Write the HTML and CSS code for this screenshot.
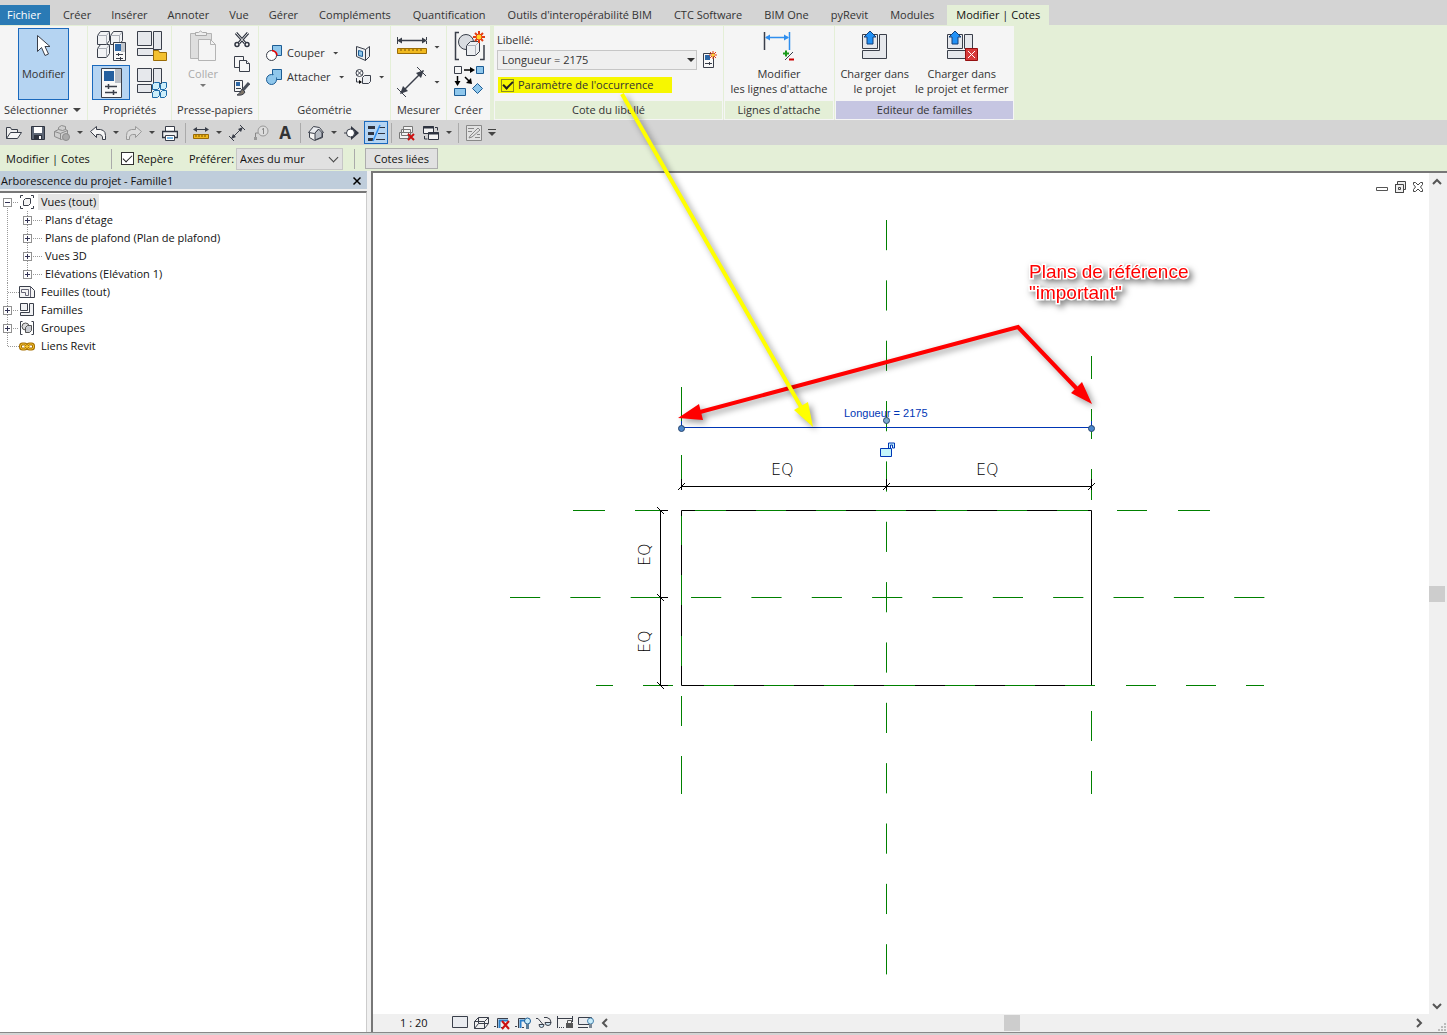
FILE: index.html
```html
<!DOCTYPE html>
<html lang="fr">
<head>
    <meta charset="UTF-8">
    <meta name="viewport" content="width=device-width, initial-scale=1.0">
    <title>Famille1</title>
    <link rel="stylesheet" href="styles.css">
</head>
<body>
    <div class="app">
        <nav class="tabs">
            <button class="tab file">Fichier</button>
            <button class="tab">Créer</button>
            <button class="tab">Insérer</button>
            <button class="tab">Annoter</button>
            <button class="tab">Vue</button>
            <button class="tab">Gérer</button>
            <button class="tab">Compléments</button>
            <button class="tab">Quantification</button>
            <button class="tab">Outils d'interopérabilité BIM</button>
            <button class="tab">CTC Software</button>
            <button class="tab">BIM One</button>
            <button class="tab">pyRevit</button>
            <button class="tab">Modules</button>
            <button class="tab active">Modifier | Cotes</button>
        </nav>

        <div class="ribbon">
            <section class="panel">
                <div class="panel-body">
                    <button class="big selected">
                        <svg width="32" height="32" viewBox="0 0 32 32"><path d="M9.500 5.500v16l4-4 3.500 8 3.500-1.500-3.500-7.500h5z" fill="#fff" stroke="#3a3f4a"/></svg>
                        <span>Modifier</span>
                    </button>
                </div>
                <div class="panel-title">Sélectionner <i class="caret wide"></i></div>
            </section>

            <section class="panel">
                <div class="panel-body props">
                    <button class="tool" aria-label="Propriétés du type">
                        <svg width="32" height="32" viewBox="0 0 32 32">
                            <g fill="#f2f3f5" stroke="#3a3f4a"><path d="M2.500 5.500l3-4h9v9l-3 4h-9zM15.500 5.500l3-4h9v9l-3 4h-9zM2.500 18.500l3-4h9v9l-3 4h-9z"/><path d="M2.500 5.500h9v9M11.500 5.500l3-4M15.500 5.500h9v8M24.500 5.500l3-4M2.500 18.500h9v9M11.500 18.500l3-4" fill="none" stroke="#a9adb5"/><path d="M18.500 12.500h12v18h-12z" fill="#f8f8f8"/></g>
                            <path d="M20 14h6v7h-6z" fill="#2d67a6"/><path d="M26 13h4v9h-4z" fill="#c4c8ce"/><path d="M21 24.500h7M21 28.500h7M23.500 23v3M25.500 27v3" stroke="#3a3f4a"/>
                        </svg>
                    </button>
                    <button class="tool" aria-label="Catégorie et paramètres">
                        <svg width="32" height="32" viewBox="0 0 32 32">
                            <g fill="#e6e8ec" stroke="#3a3f4a"><path d="M2.500 1.500h14v14h-14z"/><path d="M18.500 1.500h8v18h-8z"/><path d="M2.500 18.500h16v7h-16z"/></g>
                            <path d="M18.500 20.500h5l1 2h7v8h-13z" fill="#f3c02f" stroke="#9a6b05"/>
                        </svg>
                    </button>
                    <button class="tool selected" aria-label="Propriétés">
                        <svg width="32" height="32" viewBox="0 0 32 32">
                            <path d="M6.500 1.500h20v29h-20z" fill="#f8f8f8" stroke="#3a3f4a"/><path d="M20 2h6v14h-6z" fill="#b9bec6"/><path d="M9 4h10v10H9z" fill="#245f9f"/>
                            <path d="M10 19.500h12M10 25.500h12M13.500 17v5M18.500 23v5" stroke="#3a3f4a" stroke-width="1.500"/>
                        </svg>
                    </button>
                    <button class="tool" aria-label="Types de familles">
                        <svg width="32" height="32" viewBox="0 0 32 32">
                            <g fill="#e6e8ec" stroke="#3a3f4a"><path d="M2.500 1.500h14v13h-14z"/><path d="M18.500 1.500h8v15h-8z"/><path d="M2.500 17.500h14v8h-14z"/></g>
                            <g fill="#cdeefa" stroke="#1c6aa8"><path d="M17.500 17.500l2-2h5v5l-2 2h-5zM25.500 17.500l2-2h4v5l-2 2h-4zM17.500 25.500l2-2h5v5l-2 2h-5zM25.500 25.500l2-2h4v5l-2 2h-4z"/></g>
                        </svg>
                    </button>
                </div>
                <div class="panel-title">Propriétés</div>
            </section>

            <section class="panel">
                <div class="panel-body clip">
                    <button class="big" disabled>
                        <svg width="32" height="32" viewBox="0 0 32 32"><path d="M3.500 3.500h21v25h-21z" fill="#dedede" stroke="#b4b4b4"/><path d="M8.500 5.500v-3h3q2-3 4 0h4v3z" fill="#eee" stroke="#aaa"/><path d="M11.500 9.500h12l5 5v16h-17z" fill="#f4f4f4" stroke="#b4b4b4"/><path d="M23.500 9.500v5h5" fill="none" stroke="#b4b4b4"/></svg>
                        <span>Coller</span>
                        <i class="caret"></i>
                    </button>
                    <div class="stack">
                        <button class="small" aria-label="Couper"><svg width="16" height="16" viewBox="0 0 16 16"><path d="M2 1l9 10M14 1L5 11" stroke="#2f3440" stroke-width="3"/><path d="M2 1l9 10M14 1L5 11" stroke="#eee"/><g fill="none" stroke="#2f3440" stroke-width="1.500"><circle cx="3" cy="12.500" r="2"/><circle cx="13" cy="12.500" r="2"/></g></svg></button>
                        <button class="small" aria-label="Copier"><svg width="16" height="16" viewBox="0 0 16 16"><g fill="#f6f6f6" stroke="#3a3f4a"><path d="M.5.5h9v11h-9z"/><path d="M5.500 4.500h7l3 3v8h-10z"/><path d="M12.500 4.500v3h3"/></g></svg></button>
                        <button class="small" aria-label="Copier le type"><svg width="16" height="16" viewBox="0 0 16 16"><path d="M.5.500h8v11h-8z" fill="#f6f6f6" stroke="#3a3f4a"/><path d="M2 2h4v4H2z" fill="#2d67a6"/><path d="M2 8.500h5" stroke="#3a3f4a"/><path d="M15 3l-6 7" stroke="#4a4f5a" stroke-width="3"/><path d="M8 9l3 3q-2 4-8 3 3-1 5-6z" fill="#7c7368" stroke="#3a3f4a"/></svg></button>
                    </div>
                </div>
                <div class="panel-title">Presse-papiers</div>
            </section>

            <section class="panel">
                <div class="panel-body geo">
                    <div class="stack">
                        <button class="row"><svg width="16" height="16" viewBox="0 0 16 16"><path d="M6.500.5h9v10h-9z" fill="#8fc7ec" stroke="#1c5c94"/><circle cx="5.500" cy="10.500" r="5" fill="#fff" stroke="#3a3f4a"/><path d="M6 5.500q5 1 5 5" fill="none" stroke="#e00" stroke-width="1.500"/></svg>Couper<i class="caret"></i></button>
                        <button class="row"><svg width="16" height="16" viewBox="0 0 16 16"><g fill="#8fc7ec" stroke="#1c5c94"><path d="M6.500.5h9v10h-9z"/><circle cx="5.500" cy="10.500" r="5"/></g><path d="M7 6h3v4H7z" fill="#8fc7ec"/></svg>Attacher<i class="caret"></i></button>
                    </div>
                    <div class="stack">
                        <button class="row" aria-label="Scinder"><svg width="16" height="16" viewBox="0 0 16 16"><path d="M1.500 1.500l9 3 4-3v10l-4 4-9-4z" fill="#eceef1" stroke="#3a3f4a"/><path d="M10.500 4.500v11" stroke="#3a3f4a"/><path d="M3.500 5.500l4 1v5l-4-1z" fill="#8fc7ec" stroke="#1c5c94"/></svg></button>
                        <button class="row" aria-label="Démolir"><svg width="16" height="16" viewBox="0 0 16 16"><circle cx="4.500" cy="4" r="3.500" fill="#fff" stroke="#3a3f4a"/><path d="M2 1.500l5 5M7 1.500l-5 5M1.500 9v4h3" fill="none" stroke="#3a3f4a"/><path d="M4 11l3 2-3 2z"/><path d="M7.500 8.500l2-2h6v6l-2 2h-6z" fill="#eceef1" stroke="#3a3f4a"/></svg><i class="caret"></i></button>
                    </div>
                </div>
                <div class="panel-title">Géométrie</div>
            </section>

            <section class="panel">
                <div class="panel-body measure">
                    <button class="row"><svg width="32" height="32" viewBox="0 0 32 32"><path d="M3 9.500h26" stroke="#3a3f4a" stroke-width="1.500"/><path d="M1 9.500l5-3v6zM31 9.500l-5-3v6zM1 6h1v7H1zM30 6h1v7h-1z" fill="#3a3f4a"/><path d="M1.500 17.500h29v5h-29z" fill="#f0b91f" stroke="#9a6b05"/><path d="M5 18v2M9 18v2M13 18v2M17 18v2M21 18v2M25 18v2" stroke="#7b5300"/></svg><i class="caret"></i></button>
                    <button class="row"><svg width="32" height="32" viewBox="0 0 32 32"><path d="M5 27L27 5" stroke="#3a3f4a" stroke-width="1.500"/><path d="M1 22l9 9M21 1l9 9" stroke="#3a3f4a"/><path d="M4 28l3-8 5 5zM28 4l-8 3 5 5z" fill="#3a3f4a"/></svg><i class="caret"></i></button>
                </div>
                <div class="panel-title">Mesurer</div>
            </section>

            <section class="panel">
                <div class="panel-body create">
                    <button class="tool" aria-label="Créer un groupe"><svg width="32" height="32" viewBox="0 0 32 32"><path d="M5 2.500H1.500v27H5M26 29.500h4V15" fill="none" stroke="#3a3f4a" stroke-width="1.500"/><circle cx="12" cy="12" r="7.500" fill="#d9dce1" stroke="#3a3f4a"/><path d="M12.500 15.500l4-4h9v10l-4 4h-9z" fill="#eceef1" stroke="#3a3f4a"/><path d="M12.500 15.500h9v10M21.500 15.500l4-4" fill="none" stroke="#a9adb5"/><path d="M25 1v12M19 7h12M21 3l8 8M29 3l-8 8" stroke="#e33b12" stroke-width="2"/><circle cx="25" cy="7" r="3" fill="#ffd52e" stroke="#e33b12"/></svg></button>
                    <button class="tool" aria-label="Créer un assemblage"><svg width="32" height="32" viewBox="0 0 32 32"><path d="M.5 1.500h7v7h-7z" fill="#f4f4f4" stroke="#3a3f4a"/><g fill="#8fc7ec" stroke="#1c5c94"><path d="M22.500 1.500h7v7h-7zM.5 23.500h11v7H.5zM23.500 18.500l5 5-5 5-5-5z"/></g><path d="M10 5h8M3.500 11v7M11 12l5 5" stroke="#000" stroke-width="1.500"/><path d="M21 5l-5-3v6zM3.500 21l-3-5h6zM18 19l-1-6-5 5z"/></svg></button>
                </div>
                <div class="panel-title">Créer</div>
            </section>

            <section class="panel context">
                <div class="panel-body label-body">
                    <label for="libelle">Libellé:</label>
                    <div class="label-row">
                        <div class="combo">
                            <select id="libelle"><option>Longueur = 2175</option></select>
                        </div>
                        <button class="small" aria-label="Créer un paramètre"><svg width="16" height="18" viewBox="0 0 16 18"><path d="M2.500 2.500h10v14h-10z" fill="#f8f8f8" stroke="#3a3f4a"/><path d="M4 4h5v5H4z" fill="#2d67a6"/><path d="M4 12.500h7M8.500 11v3" stroke="#3a3f4a"/><path d="M12 0v8M8 4h8M9 1l6 6M15 1L9 7" stroke="#e33b12"/><circle cx="12" cy="4" r="1.500" fill="#ffd52e"/></svg></button>
                    </div>
                    <label class="highlight"><input type="checkbox" checked>Paramètre de l'occurrence</label>
                </div>
                <div class="panel-title">Cote du libellé</div>
            </section>

            <section class="panel context">
                <div class="panel-body">
                    <button class="big">
                        <svg width="32" height="32" viewBox="0 0 32 32"><path d="M1.500 2v18" stroke="#3a3f4a" stroke-width="1.500"/><path d="M26.500 2v18M3 7.500h22" stroke="#2f8eee" stroke-width="1.500"/><path d="M2 7.500l5-3v6zM26 7.500l-5-3v6z" fill="#2f8eee"/><path d="M20 23.500h6M23 20.500v6" stroke="#1a9a1a" stroke-width="2"/><path d="M30 22l-8 8" stroke="#3a3f4a"/><path d="M26 29.500h5" stroke="#c00" stroke-width="2"/></svg>
                        <span>Modifier<br>les lignes d'attache</span>
                    </button>
                </div>
                <div class="panel-title">Lignes d'attache</div>
            </section>

            <section class="panel context family">
                <div class="panel-body pair">
                    <button class="big">
                        <svg width="32" height="32" viewBox="0 0 32 32"><g fill="#e6e8ec" stroke="#3a3f4a"><path d="M3.500 4.500h15v14h-15z"/><path d="M20.500 4.500h7v24h-24v-8h17z"/></g><path d="M11 1l6 6h-3v7H8V7H5z" fill="#2291f5" stroke="#123f78"/></svg>
                        <span>Charger dans<br>le projet</span>
                    </button>
                    <button class="big">
                        <svg width="32" height="32" viewBox="0 0 32 32"><g fill="#e6e8ec" stroke="#3a3f4a"><path d="M1.500 4.500h15v14h-15z"/><path d="M18.500 4.500h8v14h-8z"/><path d="M1.500 20.500h18v8h-18z"/></g><path d="M9 1l6 6h-3v7H6V7H3z" fill="#2291f5" stroke="#123f78"/><path d="M19.500 18.500h12v12h-12z" fill="#d83a3a" stroke="#941010"/><path d="M22 21l7 7M29 21l-7 7" stroke="#fff"/></svg>
                        <span>Charger dans<br>le projet et fermer</span>
                    </button>
                </div>
                <div class="panel-title">Editeur de familles</div>
            </section>
        </div>

        <div class="quick">
            <button aria-label="Ouvrir"><svg width="16" height="16" viewBox="0 0 16 16"><path d="M.5 13.500v-11h4l1 2h6v3" fill="#eee" stroke="#3a3f4a"/><path d="M.5 13.500l4-6h11l-4 6z" fill="#f6f6f6" stroke="#3a3f4a"/></svg></button>
            <button aria-label="Enregistrer"><svg width="16" height="16" viewBox="0 0 16 16"><path d="M1.500 1.500h13v13h-13z" fill="#5d6675" stroke="#2f3440"/><path d="M4 2h8v6H4z" fill="#fff"/><path d="M4 10h8v4H4z" fill="#2f3440"/><path d="M9 11h2v3H9z" fill="#fff"/></svg></button>
            <button aria-label="Synchroniser"><svg width="16" height="16" viewBox="0 0 16 16"><path d="M.5 6.500l4-2v-2l3-2 4 1v3l2 1v6l-6 3-7-3z" fill="#cfcfcf" stroke="#8c8c8c"/><path d="M.5 6.500l6 2v6M6.500 8.500l7-3M4.500 4.500l4 1 3-1" fill="none" stroke="#8c8c8c"/><circle cx="12" cy="12" r="3.500" fill="#aaa" stroke="#8c8c8c"/></svg></button>
            <i class="caret"></i>
            <button aria-label="Annuler"><svg width="16" height="16" viewBox="0 0 16 16"><path d="M.5 6.500l6-5v3q9-1 9 6v4h-3q1-6-6-5v3z" fill="#f6f6f6" stroke="#3a3f4a"/></svg></button>
            <i class="caret"></i>
            <button aria-label="Rétablir"><svg width="16" height="16" viewBox="0 0 16 16"><path d="M15.500 6.500l-6-5v3q-9-1-9 6v4h3q-1-6 6-5v3z" fill="#ddd" stroke="#999"/></svg></button>
            <i class="caret"></i>
            <button aria-label="Imprimer"><svg width="16" height="16" viewBox="0 0 16 16"><path d="M3.500 1.500h9v5h-9z" fill="#fff" stroke="#3a3f4a"/><path d="M.5 6.500h15v6H.5z" fill="#f0f0f0" stroke="#2f3440" stroke-width="1.500"/><path d="M3.500 10.500h9v5h-9z" fill="#fff" stroke="#3a3f4a"/><path d="M5 12h6v2H5z" fill="#79b8e6"/></svg></button>
            <i class="sep"></i>
            <button aria-label="Mesurer"><svg width="16" height="16" viewBox="0 0 16 16"><path d="M2 4.500h12" stroke="#3a3f4a"/><path d="M0 4.500l4-2.500v5zM16 4.500L12 2v5z" fill="#3a3f4a"/><path d="M.5 9.500h15v4H.5z" fill="#f0b91f" stroke="#9a6b05"/><path d="M3 10v2M6 10v2M9 10v2M12 10v2" stroke="#7b5300"/></svg></button>
            <i class="caret"></i>
            <button aria-label="Cote alignée"><svg width="16" height="16" viewBox="0 0 16 16"><path d="M3 13L13 3M0 11l5 5M11 0l5 5" stroke="#3a3f4a"/><path d="M2 14l2-5 3 3zM14 2L9 4l3 3z" fill="#3a3f4a"/></svg></button>
            <button aria-label="Étiquette"><svg width="16" height="16" viewBox="0 0 16 16"><circle cx="10" cy="6" r="5" fill="#ddd" stroke="#999"/><path d="M10.500 3v6M9 4.500l1.500-1M5 8H2.500v5" fill="none" stroke="#888"/><path d="M1 12h3v3H1z" fill="#999"/></svg></button>
            <button class="letter">A</button>
            <i class="sep"></i>
            <button aria-label="Vue 3D"><svg width="16" height="16" viewBox="0 0 16 16"><path d="M1.500 7v5.500l5 3 8-3V7z" fill="#f4f4f4" stroke="#3a3f4a"/><path d="M7 8l4-4 3 3v5l-7 3z" fill="#b9bec6" stroke="#3a3f4a"/><path d="M.5 7.500l5-6 6 1 4 5-1 .5-4-4-4 4.500z" fill="#e9ebef" stroke="#3a3f4a"/></svg></button>
            <i class="caret"></i>
            <button aria-label="Coupe"><svg width="16" height="16" viewBox="0 0 16 16"><path d="M7 1l8 7-8 7z" fill="#2f3440"/><path d="M0 8h3" stroke="#3a3f4a"/><circle cx="6.500" cy="8" r="4" fill="#fff" stroke="#3a3f4a"/></svg></button>
            <button class="selected" aria-label="Lignes fines"><svg width="18" height="18" viewBox="0 0 18 18"><path d="M1 3.500h7M1 9.500h6M1 15.500h5" stroke="#2f3440" stroke-width="3"/><path d="M12 3.500h6M11 9.500h7M9 15.500h9" stroke="#2f3440"/><path d="M13 1L6 17" stroke="#2f8eee" stroke-width="1.500"/></svg></button>
            <i class="sep"></i>
            <button aria-label="Fermer les fenêtres inactives"><svg width="16" height="16" viewBox="0 0 16 16"><g fill="#f4f4f4" stroke="#777"><path d="M4.500 1.500h9v6h-9zM2.500 4.500h9v6h-9zM.5 7.500h9v6h-9z"/></g><path d="M9 9l6 6M15 9l-6 6" stroke="#c11" stroke-width="2"/></svg></button>
            <button aria-label="Changer de fenêtre"><svg width="16" height="16" viewBox="0 0 16 16"><path d="M.5 1.500h10v7H.5zM5.500 7.500h10v7h-10z" fill="#f4f4f4" stroke="#2f3440"/><path d="M0 2.500h11M5 8.500h11" stroke="#2f3440" stroke-width="2"/><path d="M12 2.500h2.500v3M1.500 11v3h3" fill="none" stroke="#2f3440"/></svg></button>
            <i class="caret"></i>
            <i class="sep"></i>
            <button aria-label="Note"><svg width="16" height="16" viewBox="0 0 16 16"><path d="M.5.500h15v15H.5z" fill="#e2e2e2" stroke="#888"/><path d="M4 11l8-8 2 2-8 7-3 1zM2 3.500h6M2 6.500h4M9 12.500h5M11 9.500h3" fill="none" stroke="#888"/></svg></button>
            <i class="caret bar"></i>
        </div>

        <div class="options">
            <span class="mode">Modifier | Cotes</span>
            <label class="check"><input type="checkbox" checked>Repère</label>
            <label class="prefer" for="prefer">Préférer:</label>
            <div class="combo flat">
                <select id="prefer"><option>Axes du mur</option></select>
            </div>
            <i class="divider"></i>
            <button class="linked">Cotes liées</button>
        </div>

        <main class="work">
            <aside class="browser">
                <header><span>Arborescence du projet - Famille1</span><button aria-label="Fermer"><svg width="10" height="10" viewBox="0 0 10 10"><path d="M1.500 1.500l7 7M8.500 1.500l-7 7" stroke="#000" stroke-width="1.500"/></svg></button></header>
                <ul class="tree">
                    <li>
                        <div class="node"><b class="box minus"></b><svg width="16" height="16" viewBox="0 0 16 16"><path d="M4 1.500H1.500V4M12 1.500h2.500V4M1.500 12v2.500H4M14.500 12v2.500H12" fill="none" stroke="#3a3f4a"/><path d="M4.500 6.500l2-2h5v5l-2 2h-5z" fill="#f4f4f4" stroke="#3a3f4a"/></svg><span class="current">Vues (tout)</span></div>
                        <ul>
                            <li><div class="node"><b class="box"></b><span>Plans d'étage</span></div></li>
                            <li><div class="node"><b class="box"></b><span>Plans de plafond (Plan de plafond)</span></div></li>
                            <li><div class="node"><b class="box"></b><span>Vues 3D</span></div></li>
                            <li><div class="node"><b class="box"></b><span>Elévations (Elévation 1)</span></div></li>
                        </ul>
                    </li>
                    <li><div class="node"><b class="line"></b><svg width="16" height="16" viewBox="0 0 16 16"><path d="M.5 2.500h11l4 4v7H.5z" fill="#f4f4f4" stroke="#3a3f4a"/><path d="M2.500 5.500h7v6h-3v-3h-4zM11.500 3v10" fill="none" stroke="#667"/></svg><span>Feuilles (tout)</span></div></li>
                    <li><div class="node"><b class="box"></b><svg width="16" height="16" viewBox="0 0 16 16"><path d="M1.500 1.500h7v7h-7zM10.500 1.500h4v12h-13v-3h9z" fill="#f0f1f3" stroke="#3a3f4a"/></svg><span>Familles</span></div></li>
                    <li><div class="node"><b class="box"></b><svg width="16" height="16" viewBox="0 0 16 16"><path d="M3.500 1.500h-2v13h2M12.500 1.500h2v13h-2" fill="none" stroke="#3a3f4a"/><circle cx="6.500" cy="6.500" r="3.500" fill="#ddd" stroke="#555"/><path d="M6.500 7.500l2-2h4v5l-2 2h-4z" fill="#c9ccd2" stroke="#555"/></svg><span>Groupes</span></div></li>
                    <li><div class="node"><b class="line"></b><svg width="16" height="16" viewBox="0 0 16 16"><g fill="none" stroke="#a66f00" stroke-width="3"><rect x="1.500" y="6" width="6" height="5" rx="2"/><rect x="8.500" y="6" width="6" height="5" rx="2"/></g><g fill="none" stroke="#f5c431"><rect x="1.500" y="6" width="6" height="5" rx="2"/><rect x="8.500" y="6" width="6" height="5" rx="2"/><path d="M5 8.500h6"/></g></svg><span>Liens Revit</span></div></li>
                </ul>
            </aside>

            <section class="view">
                <div class="canvas">
                    <svg class="drawing" width="1056" height="840" viewBox="373 173 1056 840">
                        <!-- reference rectangle -->
                        <path d="M681.500 510.500h410v175h-410z" fill="none" stroke="#000"/>
                        <!-- reference planes -->
                        <g fill="none" stroke="#008000">
                            <path d="M886.500 220V975" stroke-dasharray="30.200 30.150"/>
                            <path d="M681.500 387v38M681.500 455v31M681.500 516v29M681.500 575v30M681.500 636v30M681.500 696v30M681.500 756v38"/>
                            <path d="M1091.500 356v23M1091.500 409v30M1091.500 469v31M1091.500 711v30M1091.500 771v23"/>
                            <path d="M573 510.500h32M635 510.500h30M695 510.500h31M756 510.500h30M816 510.500h30M876 510.500h30M936 510.500h31M997 510.500h30M1057 510.500h31M1117 510.500h30M1178 510.500h32"/>
                            <path d="M510 597.500H1265" stroke-dasharray="30.200 30.150"/>
                            <path d="M596 685.500h17M643 685.500h30M704 685.500h30M764 685.500h30M824 685.500h30M884 685.500h31M945 685.500h30M1005 685.500h30M1065 685.500h30M1126 685.500h30M1186 685.500h30M1246 685.500h18"/>
                        </g>
                        <!-- EQ dimensions -->
                        <g fill="none" stroke="#000">
                            <path d="M681 486.500h411M681.500 479v11M886.500 479v11M1091.500 479v11M678 490l7-7M883 490l7-7M1088 490l7-7"/>
                            <path d="M660.500 510v176M660 510.500h8M660 597.500h8M660 685.500h8M657 507l7 7M657 594l7 7M657 682l7 7"/>
                        </g>
                        <g class="eq">
                            <text x="771" y="475">EQ</text>
                            <text x="976" y="475">EQ</text>
                            <text transform="translate(650 566) rotate(-90)">EQ</text>
                            <text transform="translate(650 653) rotate(-90)">EQ</text>
                        </g>
                        <!-- selected dimension -->
                        <path d="M681 427.500h411M681.500 421v8M1091.500 421v8" stroke="#0036b5"/>
                        <g fill="#4a86cc" stroke="#29466e">
                            <circle cx="681.500" cy="428.500" r="3"/>
                            <circle cx="1091.500" cy="428.500" r="3"/>
                            <circle cx="886.500" cy="420.500" r="3" fill="#7aa9cf"/>
                        </g>
                        <text class="dim" x="844" y="417">Longueur = 2175</text>
                        <path d="M880.500 448.500h11v8h-11z" fill="#c4f5fb" stroke="#0036b5"/>
                        <path d="M888.500 448v-5h6v5h-2v-3h-2v3" fill="#c4f5fb" stroke="#0036b5"/>
                    </svg>
                    <div class="window-buttons">
                        <svg width="14" height="14" viewBox="0 0 14 14"><path d="M1.500 7.500h11v3h-11z" fill="#fff" stroke="#555"/></svg>
                        <svg width="14" height="14" viewBox="0 0 14 14"><path d="M4.500 1.500h8v8h-2v3h-8v-8h2z" fill="#eee" stroke="#444"/><path d="M2.500 4.500h8v8h-8zM5.500 7.500h2v2h-2z" fill="none" stroke="#444"/></svg>
                        <svg width="14" height="14" viewBox="0 0 14 14"><path d="M2.500 2.500h2L7 5l2.500-2.500h2v2L9.500 7l2 2.500v2h-2L7 9l-2.500 2.500h-2v-2l2-2.500-2-2.500z" fill="#fff" stroke="#444"/></svg>
                    </div>
                </div>
                <div class="vscroll">
                    <svg width="10" height="10" viewBox="0 0 10 10"><path d="M1 7l4-4 4 4" fill="none" stroke="#555" stroke-width="2"/></svg>
                    <i class="thumb"></i>
                    <svg width="10" height="10" viewBox="0 0 10 10"><path d="M1 3l4 4 4-4" fill="none" stroke="#555" stroke-width="2"/></svg>
                </div>
                <div class="viewbar">
                    <span class="scale">1 : 20</span>
                    <button aria-label="Niveau de détail"><svg width="16" height="16" viewBox="0 0 16 16"><path d="M.5 1.500h15v11H.5z" fill="#e9ebef" stroke="#3a3f4a"/></svg></button>
                    <button aria-label="Style visuel"><svg width="16" height="16" viewBox="0 0 16 16"><path d="M1.500 6.500l4-4h10v6l-4 5h-10zM1.500 6.500h10l4-4M11.500 6.500v7M5.500 2.500v6l-4 5M5.500 8.500h10" fill="none" stroke="#3a3f4a"/></svg></button>
                    <button aria-label="Cadrer"><svg width="16" height="16" viewBox="0 0 16 16"><path d="M3.500 13V3.500H14M0 11.500h2M7 12.500h2" fill="none" stroke="#3a3f4a"/><path d="M5.500 13V5.500H14" fill="none" stroke="#2a7fc9" stroke-width="2"/><path d="M8 6l7 8M15 6l-7 8" stroke="#c11" stroke-width="2"/></svg></button>
                    <button aria-label="Afficher le cadrage"><svg width="16" height="16" viewBox="0 0 16 16"><path d="M3.500 13V3.500H10M0 11.500h2M7 12.500h2" fill="none" stroke="#3a3f4a"/><path d="M5.500 13V5.500H10" fill="none" stroke="#2a7fc9" stroke-width="2"/><circle cx="12.500" cy="6" r="3" fill="#c8ecfa" stroke="#1c5c94"/><path d="M12.500 9v5" stroke="#5a7d99" stroke-width="3"/></svg></button>
                    <button aria-label="Masquer"><svg width="16" height="16" viewBox="0 0 16 16"><path d="M0 3.500h2l5 6M8 2.500h3q4 1 4 5" fill="none" stroke="#3a3f4a"/><path d="M3 9.500h5q0 3-2.500 3T3 9.500zM9 7.500h6q0 3-3 3t-3-3z" fill="#cfe6f2" stroke="#3a3f4a"/></svg></button>
                    <button aria-label="Contraintes"><svg width="16" height="16" viewBox="0 0 16 16"><path d="M.5 1v12M15.500 1v6M1 3.500h14" stroke="#3a3f4a"/><path d="M2 12.500h6" stroke="#3a3f4a" stroke-dasharray="1 1"/><path d="M9 8h7v5H9z" fill="#555"/><path d="M10.500 8V5.500h4V8" fill="none" stroke="#555"/></svg></button>
                    <button aria-label="Aperçu"><svg width="16" height="16" viewBox="0 0 16 16"><path d="M.5 2.500h13v7H.5zM0 12.500h10" fill="#e9ebef" stroke="#3a3f4a"/><circle cx="12.500" cy="6" r="3" fill="#c8ecfa" stroke="#4b83ad"/><path d="M12.500 9v4" stroke="#7a8794" stroke-width="3"/></svg></button>
                    <div class="hscroll">
                        <svg width="10" height="10" viewBox="0 0 10 10"><path d="M7 1L3 5l4 4" fill="none" stroke="#555" stroke-width="2"/></svg>
                        <i class="thumb"></i>
                        <svg width="10" height="10" viewBox="0 0 10 10"><path d="M3 1l4 4-4 4" fill="none" stroke="#555" stroke-width="2"/></svg>
                    </div>
                    <svg class="grip" width="10" height="10" viewBox="0 0 10 10"><path d="M7 1h2v2H7zM4 4h2v2H4zM7 4h2v2H7zM1 7h2v2H1zM4 7h2v2H4zM7 7h2v2H7z" fill="#bbb"/></svg>
                </div>
            </section>
        </main>

        <!-- annotations drawn over the whole window -->
        <svg class="notes" width="1447" height="1035" viewBox="0 0 1447 1035">
            <g class="shadow">
                <path d="M700 412L1018 327l60 63" fill="none" stroke="#f00" stroke-width="4"/>
                <path d="M678 418l21-14 4 16zM1092 404l-21-11 11-11z" fill="#f00"/>
            </g>
            <g class="shadow">
                <path d="M622 94l179 313" stroke="#ff0" stroke-width="4"/>
                <path d="M813 427l-19-17 14-8z" fill="#ff0"/>
            </g>
            <text class="callout"><tspan x="1029" y="278">Plans de référence</tspan><tspan x="1029" y="299">"important"</tspan></text>
        </svg>
    </div>
</body>
</html>
```

FILE: styles.css
```css
* {
    box-sizing: border-box;
}
body {
    margin: 0;
    font-family: "Open Sans", "Noto Sans", sans-serif;
    font-size: 11px;
    line-height: 16px;
    color: #333;
    background-color: #d4d4d4;
}
button, select, input {
    font: inherit;
    color: inherit;
    margin: 0;
}
button {
    display: flex;
    align-items: center;
    justify-content: center;
    padding: 0;
    border: 1px solid transparent;
    background: none;
    white-space: nowrap;
}
svg {
    display: block;
    flex: none;
}
.app {
    position: relative;
    display: flex;
    flex-direction: column;
    min-height: 100vh;
    padding-bottom: 2px;
    overflow: hidden;
}
.selected {
    background-color: #b5d4f2;
    border-color: #1a69bd;
}
.caret {
    flex: none;
    width: 12px;
    height: 3px;
    background: #444;
    clip-path: polygon(3px 0, 9px 0, 6px 100%);
}
.caret.wide {
    height: 4px;
    clip-path: polygon(2px 0, 10px 0, 6px 100%);
}

/* tabs */
.tabs {
    display: flex;
    height: 25px;
    padding-top: 5px;
}
.tab {
    padding: 0 9px;
}
.tab:nth-child(n+7) {
    padding: 0 10px;
}
.tabs .tab.file {
    padding: 0 8px 0 6px;
    margin-right: 3px;
    color: #fff;
    background-color: #2a7ab5;
}
.tabs .tab.active {
    padding: 0 8px;
    color: #111;
    background-color: #e4efd7;
    margin-left: 2px;
}

/* ribbon */
.ribbon {
    display: grid;
    grid-template-columns: 88px 84px 87px 132px 56px 47px 230px 111px 180px;
    height: 95px;
    background-color: #e4efd7;
    padding-top: 1px;
}
.panel {
    display: flex;
    flex-direction: column;
    min-width: 0;
    margin-right: 1px;
    background-color: #f5f5f5;
}
.panel:nth-child(6) {
    margin-right: 4px;
}
.panel-body {
    display: flex;
    justify-content: center;
    height: 75px;
    padding-top: 2px;
}
.panel-title {
    display: flex;
    align-items: center;
    justify-content: center;
    gap: 3px;
    height: 18px;
    white-space: nowrap;
}
.context .panel-title {
    margin: 0 1px;
    background-color: #e4efd7;
}
.family .panel-title {
    background-color: #c6c6e2;
}
.big {
    flex-direction: column;
    justify-content: flex-start;
    height: 72px;
    padding-top: 1px;
    line-height: 15px;
}
.big span {
    margin-top: 4px;
}
.big.selected {
    width: 51px;
}
.big:disabled {
    color: #aaa;
}
.tool {
    width: 38px;
    height: 35px;
}
.small {
    width: 24px;
    height: 24px;
}
.props {
    display: grid;
    grid-template-columns: 38px 38px;
    justify-content: center;
    align-content: start;
    gap: 2px;
    padding-left: 2px;
}
.clip {
    gap: 10px;
    padding-left: 10px;
}
.clip .caret {
    margin-top: 3px;
    background-color: #777;
}
.stack {
    display: flex;
    flex-direction: column;
}
.row {
    justify-content: flex-start;
    gap: 5px;
    height: 24px;
}
.geo {
    justify-content: flex-start;
    gap: 5px;
    padding: 15px 0 0 6px;
}
.measure {
    flex-direction: column;
    padding-left: 4px;
}
.measure .row {
    gap: 3px;
    height: 35px;
}
.create {
    flex-direction: column;
    justify-content: flex-start;
    align-items: center;
    padding-left: 2px;
}
.label-body {
    flex-direction: column;
    justify-content: flex-start;
    align-items: flex-start;
    padding: 6px 0 0 3px;
}
.label-row {
    display: flex;
    align-items: center;
    height: 24px;
}
.combo {
    position: relative;
    width: 200px;
}
.combo select {
    display: block;
    width: 100%;
    height: 20px;
    padding: 0 4px;
    appearance: none;
    border: 1px solid #c6c6c6;
    border-radius: 0;
    background-color: #efefef;
}
.combo::after {
    content: "";
    position: absolute;
    right: 2px;
    top: 8px;
    border: 4px solid transparent;
    border-top-color: #333;
    border-bottom: 0;
}
.combo.flat {
    width: 107px;
    color: #111;
}
.combo.flat select {
    height: 22px;
    padding: 0 3px;
    background-color: #e1e1e1;
}
.combo.flat::after {
    right: 6px;
    top: 6px;
    width: 6px;
    height: 6px;
    border: solid #444;
    border-width: 0 1px 1px 0;
    transform: rotate(45deg);
}
.highlight {
    display: flex;
    align-items: center;
    gap: 4px;
    width: 174px;
    height: 16px;
    margin: 5px 0 0 1px;
    padding-left: 3px;
    background-color: #f7f700;
}
input[type="checkbox"] {
    flex: none;
    display: grid;
    place-items: center;
    width: 13px;
    height: 13px;
    appearance: none;
    border: 1px solid #333;
    background-color: #fff;
}
input[type="checkbox"]:checked::before {
    content: "";
    width: 8px;
    height: 4px;
    margin-top: -3px;
    border: solid #222;
    border-width: 0 0 1px 1px;
    transform: rotate(-45deg);
}
.highlight input[type="checkbox"] {
    border-color: #8d8d20;
    background-color: transparent;
}
.highlight input[type="checkbox"]:checked::before {
    border-width: 0 0 2px 2px;
}
.pair {
    gap: 4px;
}

/* quick access bar */
.quick {
    display: flex;
    align-items: center;
    height: 25px;
    padding-left: 2px;
}
.quick button {
    width: 24px;
    height: 23px;
}
.letter {
    font-size: 17px;
    font-weight: 700;
}
.sep {
    flex: none;
    width: 7px;
    height: 20px;
    background: linear-gradient(#aaa, #aaa) center / 1px 100% no-repeat;
}
.caret.bar {
    height: 7px;
    clip-path: polygon(2px 0, 10px 0, 10px 1px, 2px 1px, 2px 3px, 10px 3px, 6px 100%, 2px 3px);
}

/* options bar */
.options {
    display: flex;
    align-items: center;
    height: 26px;
    padding: 1px 0 0 6px;
    color: #111;
    background-color: #e4efd7;
}
.mode {
    width: 106px;
    margin-right: 9px;
    border-right: 1px solid #aaa;
    line-height: 20px;
}
.check {
    display: flex;
    align-items: center;
    gap: 3px;
    width: 68px;
}
.prefer {
    width: 47px;
}
.divider {
    width: 1px;
    height: 20px;
    margin: 0 10px 0 11px;
    background-color: #aaa;
}
.linked {
    width: 73px;
    height: 21px;
    border-color: #adadad;
    background-color: #e1e1e1;
}

/* project browser */
.work {
    display: flex;
    flex: 1;
    background-color: #f0f0f0;
    border-bottom: 1px solid #888;
}
.browser {
    display: flex;
    flex-direction: column;
    width: 367px;
    color: #111;
}
.browser header {
    display: flex;
    align-items: center;
    justify-content: space-between;
    height: 18px;
    margin-bottom: 2px;
    padding: 1px 4px 0 1px;
    background-color: #bfcddb;
}
.tree {
    flex: 1;
    border-top: 2px solid #777;
    border-right: 1px solid #ccc;
    background-color: #fff;
}
.tree, .tree ul {
    margin: 0;
    padding: 0;
    list-style: none;
}
.tree > li {
    padding-left: 3px;
    background: repeating-linear-gradient(#999 0 1px, #fff 1px 2px) 7px 0 / 1px 100% no-repeat;
}
.tree > li:first-child {
    background-position: 7px 9px;
}
.tree > li:last-child {
    background-size: 1px 9px;
}
.tree ul {
    padding-left: 20px;
    background: repeating-linear-gradient(#999 0 1px, #fff 1px 2px) 24px 0 / 1px 64px no-repeat;
}
.node {
    display: flex;
    align-items: center;
    height: 18px;
}
.box {
    position: relative;
    flex: none;
    width: 9px;
    height: 9px;
    margin-right: 7px;
    border: 1px solid #919191;
    background: linear-gradient(#335, #335) center / 5px 1px no-repeat, linear-gradient(#335, #335) center / 1px 5px no-repeat, #fff;
}
.box.minus {
    background: linear-gradient(#335, #335) center / 5px 1px no-repeat, #fff;
}
.box::after {
    content: "";
    position: absolute;
    top: 3px;
    left: 9px;
    width: 5px;
    border-top: 1px dotted #999;
}
.tree ul .box::after {
    width: 9px;
}
.line {
    width: 11px;
    margin: 0 0 0 5px;
    border-top: 1px dotted #999;
}
.node span {
    padding: 0 3px;
    margin-left: 3px;
}
.current {
    background-color: #e5e5e5;
}

/* drawing view */
.view {
    display: grid;
    grid-template-columns: 1fr 18px;
    grid-template-rows: 1fr 18px;
    flex: 1;
    min-width: 0;
    margin-left: 4px;
    border-top: 2px solid #777;
    border-left: 2px solid #777;
}
.canvas {
    position: relative;
    min-width: 0;
    overflow: hidden;
    background-color: #fff;
}
.window-buttons {
    position: absolute;
    top: 7px;
    right: 4px;
    display: flex;
    gap: 4px;
}
.vscroll {
    display: flex;
    flex-direction: column;
    align-items: center;
    justify-content: space-between;
    padding: 4px 3px 3px 0;
}
.thumb {
    width: 16px;
    height: 16px;
    background-color: #cdcdcd;
}
.viewbar {
    grid-column: 1 / 3;
    display: flex;
    align-items: center;
    color: #111;
}
.viewbar button {
    width: 21px;
    height: 18px;
}
.scale {
    width: 76px;
    padding-left: 27px;
}
.hscroll {
    flex: 1;
    display: flex;
    align-items: center;
    justify-content: space-between;
    padding: 0 13px 0 4px;
}
.grip {
    align-self: flex-end;
}
.eq {
    font: 200 16px "DejaVu Sans Light", "DejaVu Sans", sans-serif;
}
.dim {
    font: 11px "Liberation Sans", Arial, sans-serif;
    fill: #0036b5;
}

/* annotations */
.notes {
    position: absolute;
    top: 0;
    left: 0;
    pointer-events: none;
}
.shadow {
    filter: drop-shadow(3px 3px 3px rgba(0, 0, 0, 0.4));
}
.callout {
    font: 19px "Liberation Sans", Arial, sans-serif;
    fill: #f00;
    stroke: #fff;
    stroke-width: 3px;
    paint-order: stroke;
    filter: drop-shadow(3px 3px 3px rgba(0, 0, 0, 0.5));
}
```
